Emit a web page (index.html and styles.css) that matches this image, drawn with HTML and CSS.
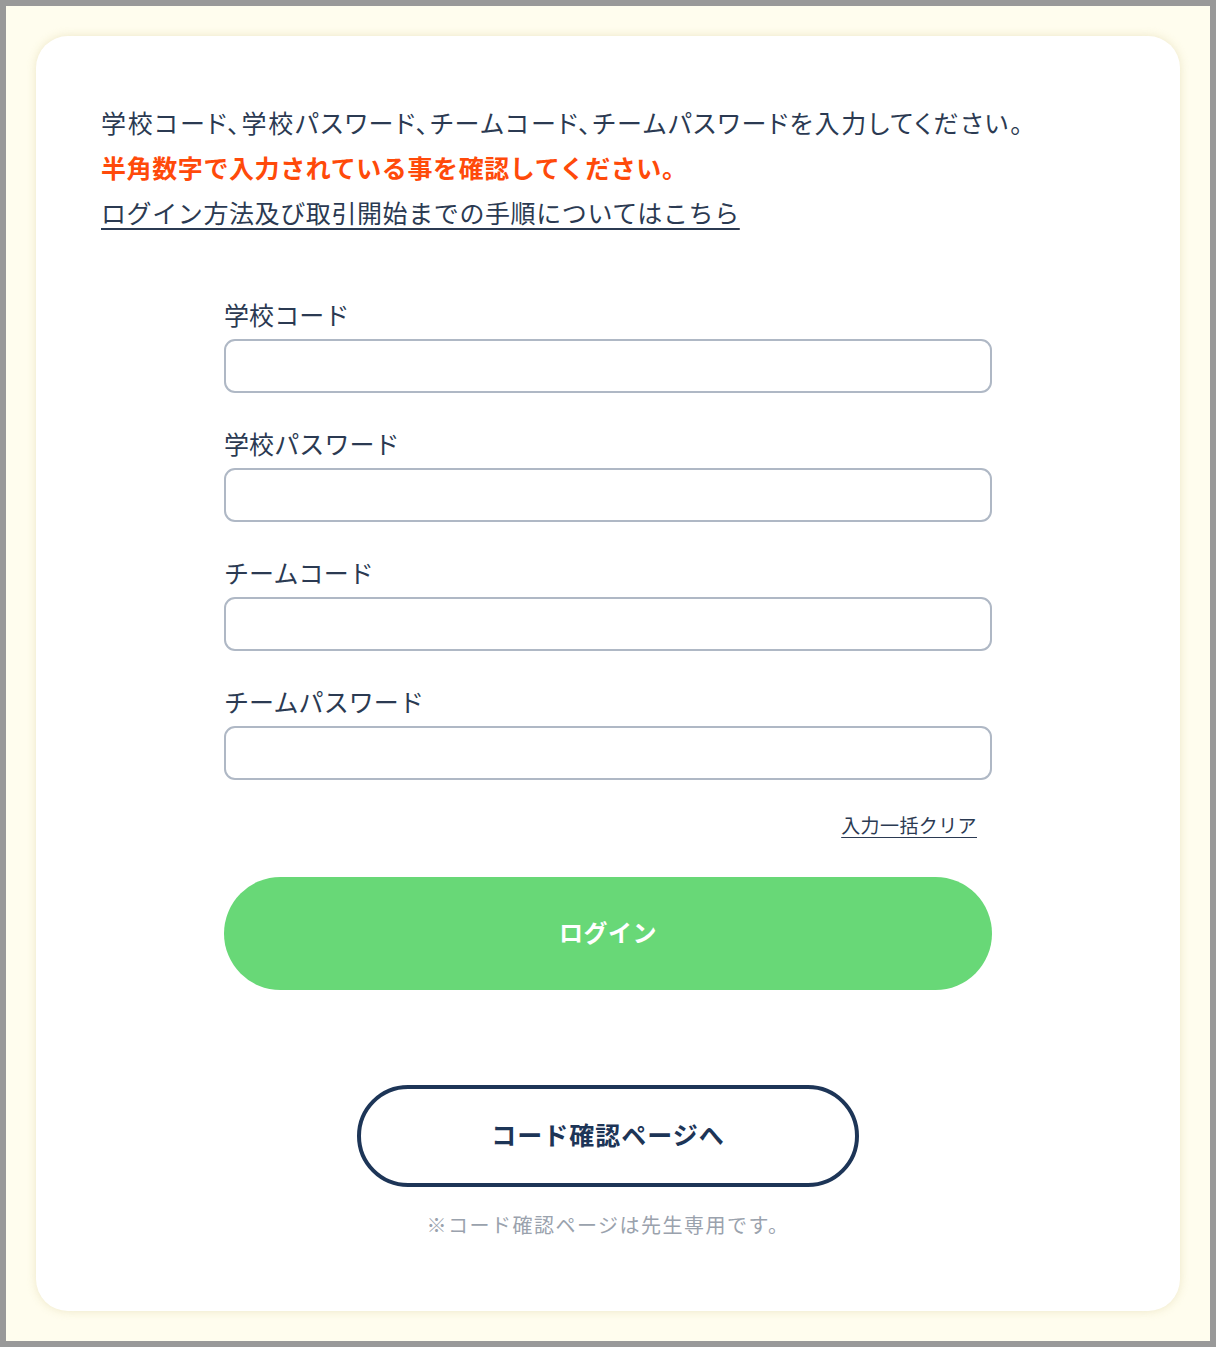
FILE: index.html
```html
<!DOCTYPE html>
<html lang="ja">
<head>
<meta charset="utf-8">
<title>ログイン</title>
<link rel="stylesheet" href="styles.css">
</head>
<body>
<div class="frame">
<div class="card">

<div class="intro">
<p class="lead">学校コード、学校パスワード、チームコード、チームパスワードを入力してください。</p>
<p class="warn">半角数字で入力されている事を確認してください。</p>
<p><a class="guide" href="#">ログイン方法及び取引開始までの手順についてはこちら</a></p>
</div>

<form class="login">
<label class="field">
<span class="label">学校コード</span>
<input type="text">
</label>
<label class="field">
<span class="label">学校パスワード</span>
<input type="password">
</label>
<label class="field">
<span class="label">チームコード</span>
<input type="text">
</label>
<label class="field">
<span class="label">チームパスワード</span>
<input type="password">
</label>
<div class="clear"><a href="#">入力一括クリア</a></div>
<button type="button" class="submit">ログイン</button>
</form>

<div class="teacher">
<a class="codebtn" href="#">コード確認ページへ</a>
<p class="note">※コード確認ページは先生専用です。</p>
</div>

</div>
</div>
</body>
</html>
```

FILE: styles.css
```css
body
  {
	margin : 0;
	font-family : "Noto Sans CJK JP", "Noto Sans", sans-serif;
	color : #2b3a52;
  } /*body*/

.frame
  {
	box-sizing : border-box;
	height : 1347px;
	border : 6px solid #999999;
	background-color : #fffdee;
	padding : 30px;
  } /*.frame*/
.card
  {
	box-sizing : border-box;
	height : 1275px;
	background-color : #ffffff;
	border-radius : 32px;
	box-shadow : 0 0 10px rgba(214, 204, 150, 0.45);
	padding : 64px 0 0 65px;
  } /*.card*/

.intro p
  {
	margin : 0;
	font-size : 25px;
	line-height : 45px;
	letter-spacing : 0.6px;
  } /*.intro p*/
.intro p.lead
  {
	font-feature-settings : "palt";
	letter-spacing : 1.8px;
  } /*.intro p.lead*/
.intro p.warn
  {
	color : #ff4a0a;
	font-weight : bold;
	letter-spacing : 0.6px;
  } /*.intro p.warn*/
a.guide
  {
	color : #2b3a52;
	text-decoration : underline;
	text-underline-offset : 5px;
	text-decoration-thickness : 2px;
  } /*a.guide*/

.login
  {
	display : flex;
	flex-direction : column;
	width : 768px;
	margin : 61px 0 0 123px;
  } /*.login*/
.field
  {
	display : flex;
	flex-direction : column;
	gap : 7px;
	margin-bottom : 32px;
  } /*.field*/
.field .label
  {
	font-size : 25px;
	line-height : 36px;
	letter-spacing : 0.1px;
  } /*.field .label*/
.field input
  {
	box-sizing : border-box;
	height : 54px;
	border : 2px solid #afb8c5;
	border-radius : 11px;
	background : #ffffff;
	font-size : 20px;
	padding : 0 14px;
  } /*.field input*/

.clear
  {
	text-align : right;
	padding-right : 15px;
	font-size : 19px;
	line-height : 28px;
	letter-spacing : 0.4px;
	margin-top : -1px;
  } /*.clear*/
.clear a
  {
	color : #2b3a52;
	text-decoration : underline;
	text-underline-offset : 4px;
  } /*.clear a*/

.submit
  {
	margin-top : 38px;
	height : 113px;
	border : none;
	border-radius : 57px;
	background-color : #68d877;
	color : #ffffff;
	font-family : inherit;
	font-size : 24px;
	font-weight : bold;
	letter-spacing : 0.5px;
	padding-bottom : 5px;
  } /*.submit*/

.teacher
  {
	display : flex;
	flex-direction : column;
	align-items : center;
	width : 768px;
	margin : 95px 0 0 123px;
  } /*.teacher*/
a.codebtn
  {
	box-sizing : border-box;
	display : flex;
	align-items : center;
	justify-content : center;
	width : 502px;
	height : 102px;
	border : 4px solid #1d3557;
	border-radius : 51px;
	color : #1d3557;
	font-size : 25px;
	font-weight : bold;
	letter-spacing : 1px;
	text-decoration : none;
	padding-bottom : 4px;
  } /*a.codebtn*/
.note
  {
	margin : 24px 0 0 0;
	color : #9aa2ad;
	font-size : 20px;
	line-height : 28px;
	letter-spacing : 1.5px;
  } /*.note*/
```
